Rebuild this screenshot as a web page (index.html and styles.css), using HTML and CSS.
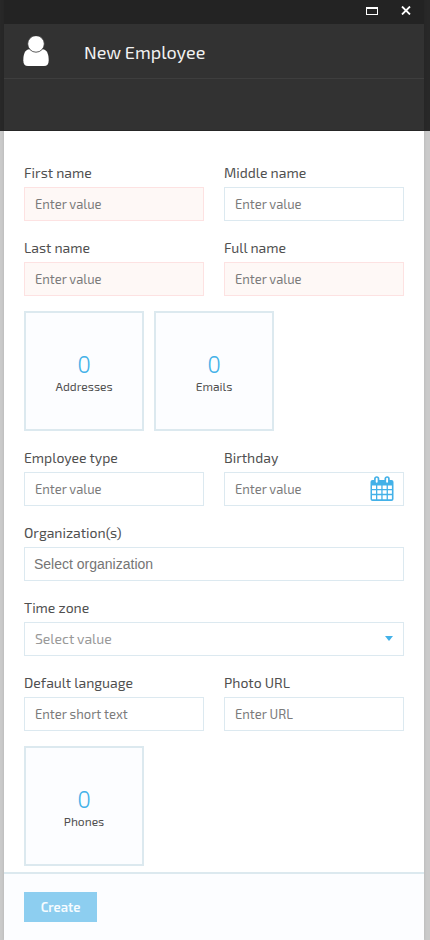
FILE: index.html
```html
<!DOCTYPE html>
<html lang="en">
<head>
<meta charset="utf-8">
<title>New Employee</title>
<link rel="stylesheet" href="styles.css">
</head>
<body>
<div class="window">
  <header class="head">
    <div class="titlebar">
      <svg width="12" height="8" viewBox="0 0 12 8"><path fill="#fff" fill-rule="evenodd" d="M0 0h12v8H0zM1 2v5h10V2z"/></svg>
      <svg class="close" width="10" height="9" viewBox="0 0 10 9"><path d="M1 .5l8 8M9 .5l-8 8" stroke="#fff" stroke-width="1.8"/></svg>
    </div>
    <div class="heading">
      <svg class="person" width="26" height="30" viewBox="0 0 26 30"><path fill="#fff" d="M6.500 13.300C2 13.800.3 18 .3 24.500c0 3.700 1.600 5.500 4.700 5.500h16c3.100 0 4.700-1.800 4.700-5.500 0-6.500-1.700-10.700-6.200-11.200z"/><circle cx="13" cy="7.900" r="8.300" fill="#fff" stroke="#323232" stroke-width=".8"/></svg>
      <h1>New Employee</h1>
    </div>
  </header>
  <main class="form">
    <div class="row">
      <div class="field"><label>First name</label><div class="input required">Enter value</div></div>
      <div class="field"><label>Middle name</label><div class="input">Enter value</div></div>
    </div>
    <div class="row">
      <div class="field"><label>Last name</label><div class="input required">Enter value</div></div>
      <div class="field"><label>Full name</label><div class="input required">Enter value</div></div>
    </div>
    <div class="tiles">
      <div class="tile"><b>0</b><span>Addresses</span></div>
      <div class="tile"><b>0</b><span>Emails</span></div>
    </div>
    <div class="row">
      <div class="field"><label>Employee type</label><div class="input">Enter value</div></div>
      <div class="field"><label>Birthday</label><div class="input with-icon">Enter value
        <svg width="24" height="26" viewBox="0 0 24 26"><rect x=".5" y="4" width="23" height="21" rx="2" fill="#43b1e8"/><path fill="#fff" d="M2 9.500h4v3.500H2zm5.300 0h4v3.500h-4zm5.300 0h4v3.500h-4zm5.300 0h4v3.500h-4zM2 14.300h4v3.500H2zm5.300 0h4v3.500h-4zm5.300 0h4v3.500h-4zm5.300 0h4v3.500h-4zM2 19.300h4v4H2zm5.300 0h4v4h-4zm5.300 0h4v4h-4zm5.300 0h4v4h-4z"/><g fill="#fff" stroke="#43b1e8" stroke-width="1.700"><rect x="4.900" y="1" width="3.600" height="6.500" rx="1.800"/><rect x="15.300" y="1" width="3.600" height="6.500" rx="1.800"/></g></svg></div></div>
    </div>
    <div class="row">
      <div class="field"><label>Organization(s)</label><div class="input org">Select organization</div></div>
    </div>
    <div class="row">
      <div class="field"><label>Time zone</label><div class="input select">Select value<svg width="8" height="5" viewBox="0 0 8 5"><path fill="#43b1e8" d="M0 0h8L4 5z"/></svg></div></div>
    </div>
    <div class="row">
      <div class="field"><label>Default language</label><div class="input">Enter short text</div></div>
      <div class="field"><label>Photo URL</label><div class="input">Enter URL</div></div>
    </div>
    <div class="tiles">
      <div class="tile"><b>0</b><span>Phones</span></div>
    </div>
  </main>
  <footer class="footer"><button>Create</button></footer>
</div>
</body>
</html>
```
FILE: styles.css
```css
* { box-sizing: border-box; }
body {
  margin: 0;
  height: 940px;
  overflow: hidden;
  padding: 0 6px 0 4px;
  background: linear-gradient(#282828 131px, #cacaca 131px);
  font-family: "Exo 2", Roboto, sans-serif;
  color: #505050;
}
svg { display: block; flex: none; }
.window { height: 940px; display: flex; flex-direction: column; background: #fff; box-shadow: 0 0 3px rgba(0,0,0,.12); }
.head { height: 131px; background: #323232; border-bottom: 1px solid #262626; }
.titlebar {
  height: 24px;
  background: #232323;
  display: flex;
  justify-content: flex-end;
  gap: 23px;
  padding: 7px 13px 0 0;
}
.close { margin-top: -1px; }
.heading {
  height: 55px;
  display: flex;
  align-items: center;
  padding-left: 19px;
  border-bottom: 1px solid #3e3e3e;
}
.person { margin-right: 35px; }
h1 { margin: 1px 0 0; font-size: 18px; line-height: 24px; font-weight: 400; color: #f2f2f2; }
.form { flex: none; height: 741px; padding: 30px 20px 0; }
.row { display: flex; gap: 20px; height: 60px; margin-bottom: 15px; }
.field { flex: 1; min-width: 0; }
label { display: block; height: 26px; line-height: 23px; font-size: 14px; white-space: nowrap; }
.input {
  height: 34px;
  display: flex;
  align-items: center;
  justify-content: space-between;
  padding: 0 10px;
  border: 1px solid #dce9f0;
  background: #fff;
  font-size: 13px;
  color: #7b7b7b;
}
.required { border-color: #fde2e2; background: #fef8f6; }
.with-icon { padding-right: 9px; }
.org { font: 14px "Liberation Sans", sans-serif; padding-left: 9px; color: #757575; }
.select { font-size: 14px; padding-bottom: 2px; color: #999; }
.tiles { display: flex; gap: 10px; margin-bottom: 15px; }
.tile {
  width: 120px;
  height: 120px;
  display: flex;
  flex-direction: column;
  align-items: center;
  padding-top: 38px;
  border: 2px solid #dce9ef;
  background: #fcfdff;
}
.tile b { font-size: 23px; line-height: 26px; font-weight: 300; color: #43b1e8; }
.tile span { font-size: 12px; line-height: 18px; }
.footer { flex: 1; border-top: 2px solid #dce9ef; background: #fcfdff; padding: 18px 20px; }
button {
  display: block;
  width: 73px;
  height: 30px;
  padding: 0;
  border: 0;
  background: #8dcef0;
  color: #f7fcff;
  font: 600 13px "Exo 2", Roboto, sans-serif;
}
```
